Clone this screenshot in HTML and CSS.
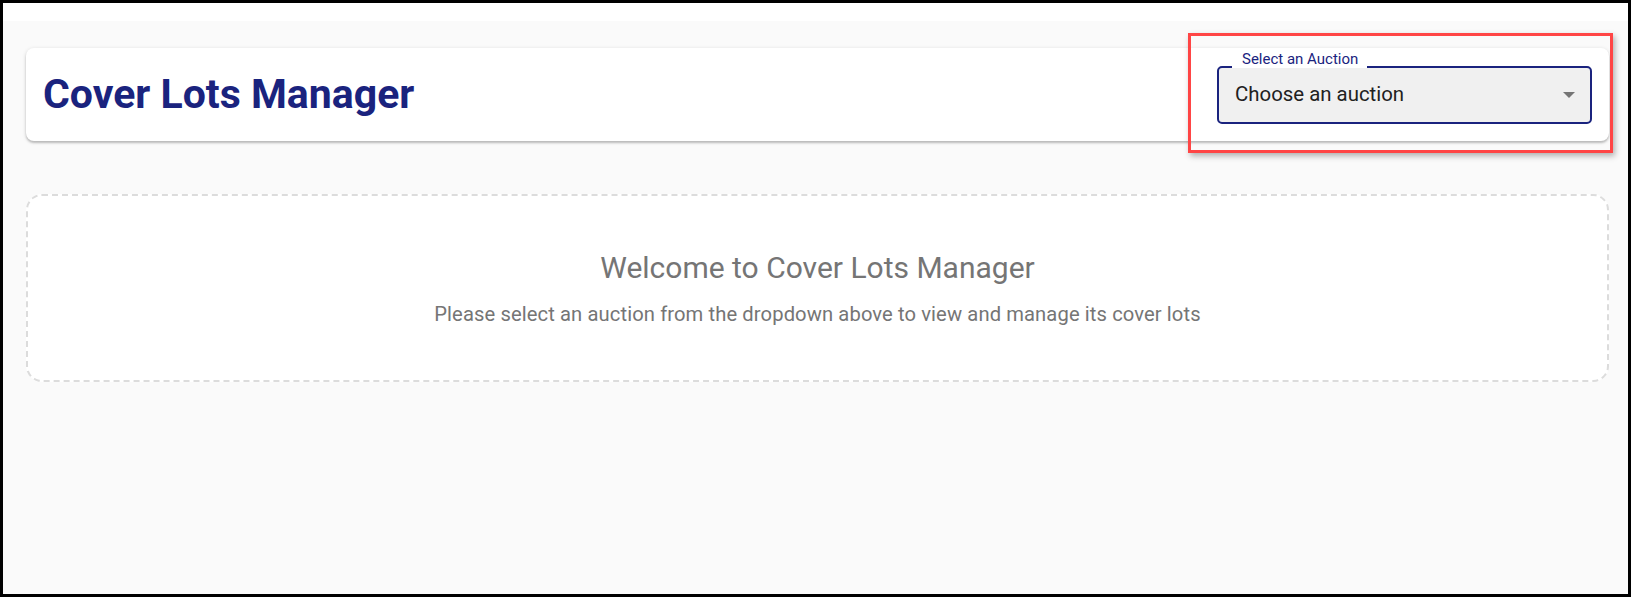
FILE: index.html
```html
<!DOCTYPE html>
<html lang="en">
<head>
<meta charset="utf-8">
<title>Cover Lots Manager</title>
<link rel="stylesheet" href="styles.css">
</head>
<body>
<div class="frame">
  <div class="topstrip"></div>
  <main class="page">
    <header class="card header">
      <h1 class="title">Cover Lots Manager</h1>
      <div class="field">
        <span class="field-label">Select an Auction</span>
        <div class="select">
          <span class="select-value">Choose an auction</span>
          <svg class="select-arrow" width="12" height="6" viewBox="0 0 12 6" aria-hidden="true"><path d="M0 0h12L6 6z" fill="#757575"/></svg>
        </div>
      </div>
    </header>
    <section class="empty">
      <h2 class="empty-title">Welcome to Cover Lots Manager</h2>
      <p class="empty-text">Please select an auction from the dropdown above to view and manage its cover lots</p>
    </section>
  </main>
  <div class="highlight"></div>
</div>
</body>
</html>
```

FILE: styles.css
```css
* { box-sizing: border-box; }
html, body { margin: 0; padding: 0; }
body {
  font-family: Roboto, "Liberation Sans", Arial, sans-serif;
  background: #000;
}
.frame {
  position: relative;
  width: 1631px;
  height: 597px;
  border: 3px solid #000;
  background: #fafafa;
  overflow: hidden;
  display: flex;
  flex-direction: column;
}
.topstrip {
  height: 18px;
  background: #fff;
  flex: none;
}
.page {
  flex: 1;
  padding: 27px 19px 0 23px;
}
.card {
  background: #fff;
  border-radius: 8px;
  box-shadow: 0 2px 2px rgba(0,0,0,0.18), 0 1px 4px rgba(0,0,0,0.14);
}
.header {
  height: 93px;
  padding: 0 17px 0 17px;
  display: flex;
  align-items: center;
  justify-content: space-between;
}
.title {
  margin: 0;
  font-size: 41px;
  font-weight: 700;
  color: #1a237e;
  line-height: 1.2;
  letter-spacing: 0;
}
.field {
  position: relative;
  width: 375px;
  height: 58px;
}
.field-label {
  position: absolute;
  left: 15px;
  top: -15px;
  padding: 0 9px 0 10px;
  background: #fff;
  font-size: 15px;
  line-height: 17px;
  color: #1a237e;
}
.select {
  height: 100%;
  border: 2px solid #1a237e;
  border-radius: 5px;
  background: #f0f0f0;
  display: flex;
  align-items: center;
  justify-content: space-between;
  padding: 0 15px 0 16px;
}
.select-value {
  font-size: 20.4px;
  color: #212121;
  margin-top: -1px;
}
.select-arrow { display: block; }
.empty {
  margin-top: 53px;
  height: 188px;
  border: 2px dashed #dcdcdc;
  border-radius: 16px;
  background: #fff;
  text-align: center;
  padding-top: 54px;
}
.empty-title {
  margin: 0;
  font-size: 30px;
  font-weight: 400;
  color: #757575;
  line-height: 36px;
}
.empty-text {
  margin: 15px 0 0;
  font-size: 20.2px;
  letter-spacing: 0.1px;
  color: #757575;
  line-height: 26px;
}
.highlight {
  position: absolute;
  left: 1185px;
  top: 30px;
  width: 425px;
  height: 120px;
  border: 3px solid #ff4545;
  box-shadow: 2px 3px 6px rgba(0,0,0,0.3);
  pointer-events: none;
}
```
